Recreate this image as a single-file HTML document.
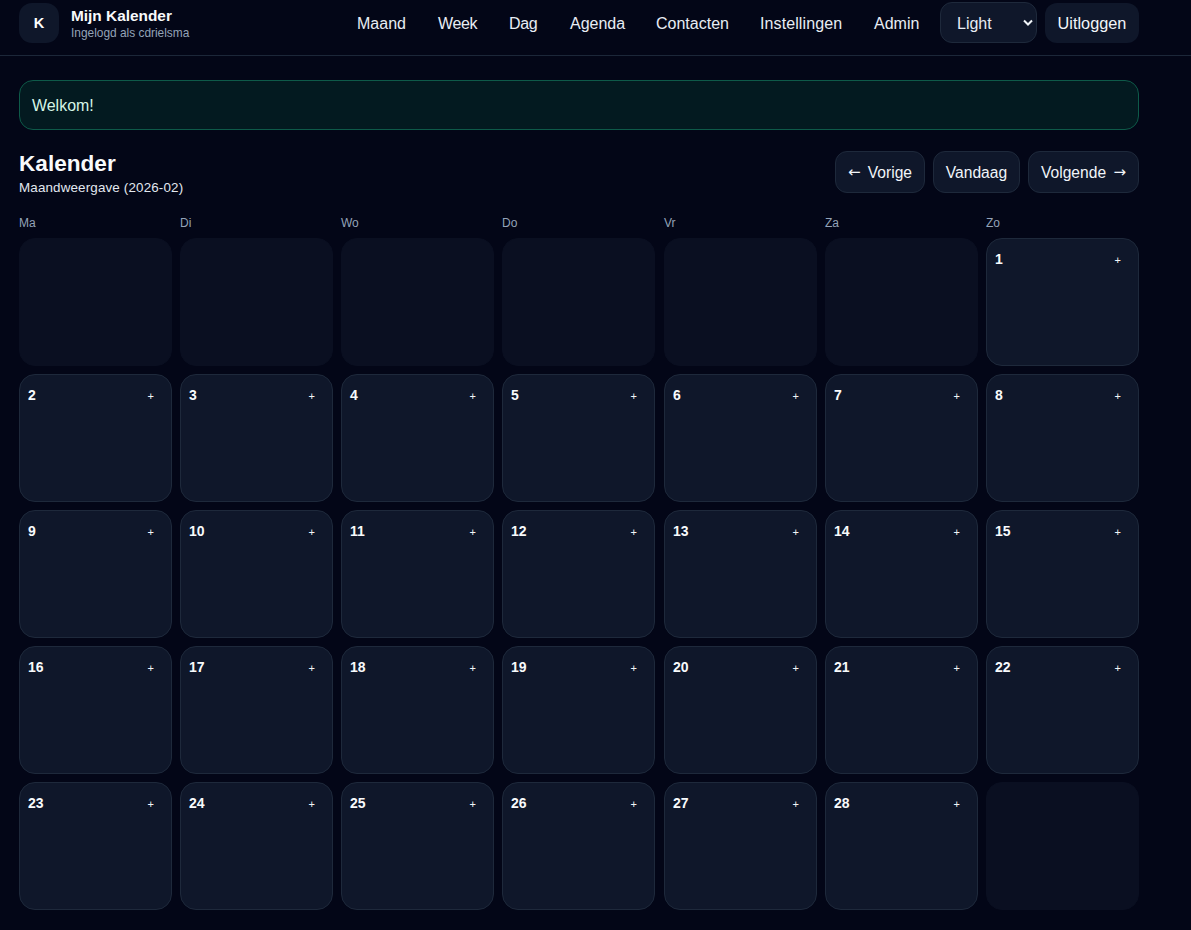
<!DOCTYPE html>
<html lang="nl">
<head>
<meta charset="utf-8">
<title>Mijn Kalender</title>
<style>
*{box-sizing:border-box;margin:0;padding:0}
html,body{width:1191px;height:930px;overflow:hidden}
body{background:#030617;color:#f1f5f9;font-family:"Liberation Sans","DejaVu Sans",sans-serif;position:relative}
.header{position:absolute;left:0;top:0;width:1191px;height:56px;border-bottom:1px solid #1c2739}
.logo{position:absolute;left:19px;top:3px;width:40px;height:40px;border-radius:13px;background:#0f172a;font-weight:700;font-size:14.6px;line-height:41px;text-align:center;color:#fff}
.brand{position:absolute;left:71px;top:6px;font-weight:700;font-size:15.4px;line-height:19px;color:#f8fafc;white-space:nowrap}
.sub{position:absolute;left:71px;top:26px;font-size:11.9px;line-height:14px;color:#94a3b8;white-space:nowrap}
.nav a{position:absolute;top:14px;font-size:16px;line-height:20px;color:#e8edf4;text-decoration:none;white-space:nowrap}
.select{position:absolute;left:940px;top:2px;width:97px;height:41px;border:1px solid #1e293b;border-radius:12px;background:#0f172a;font-size:16px;line-height:41px;padding-left:16px;color:#e8edf4}
.select svg{position:absolute;right:2px;top:14.5px}
.logout{position:absolute;left:1045px;top:3px;width:94px;height:40px;border-radius:12px;background:#0f172a;font-size:16.3px;line-height:40px;text-align:center;color:#f1f5f9}
.welcome{position:absolute;left:19px;top:80px;width:1120px;height:50px;border:1px solid #0e5a49;border-radius:14px;background:#031a20;font-size:15.95px;line-height:50px;padding-left:12px;color:#d6f5e6}
h1{position:absolute;left:19px;top:149px;font-size:22.6px;line-height:30px;font-weight:700;color:#f8fafc;white-space:nowrap}
.h1sub{position:absolute;left:19px;top:180px;letter-spacing:.15px;font-size:13.4px;line-height:16px;color:#e2e8f0;white-space:nowrap}
.btn{position:absolute;top:151px;height:42px;border:1px solid #1e293b;border-radius:12px;background:#0f172a;font-size:15.6px;line-height:42px;text-align:center;color:#f1f5f9;white-space:nowrap;word-spacing:3px}
.ar{font-family:"DejaVu Sans",sans-serif;font-size:15px;position:relative;top:-1.5px}
.dow span{position:absolute;top:216px;font-size:12px;line-height:14px;color:#94a3b8}
.cell{position:absolute;width:153px;height:128px;border-radius:16px;background:#0f172a;border:1px solid #1e293b}
.cell.e{background:#0a0f21;border-color:#0a0f21}
.cell b{position:absolute;left:8px;top:11px;font-size:14px;line-height:18px;font-weight:700;color:#f8fafc}
.cell i{position:absolute;right:17px;top:12px;font-style:normal;font-size:11px;line-height:18px;color:#f1f5f9}
</style>
</head>
<body>
<div class="header">
  <div class="logo">K</div>
  <div class="brand">Mijn Kalender</div>
  <div class="sub">Ingelogd als cdrielsma</div>
  <div class="nav">
    <a style="left:357px">Maand</a>
    <a style="left:438px;letter-spacing:-.35px">Week</a>
    <a style="left:509px;letter-spacing:-.3px">Dag</a>
    <a style="left:570px">Agenda</a>
    <a style="left:656px">Contacten</a>
    <a style="left:760px;letter-spacing:.1px">Instellingen</a>
    <a style="left:874px">Admin</a>
  </div>
  <div class="select">Light<svg width="12" height="10" viewBox="0 0 12 10"><path d="M2 2.5 L6 6.5 L10 2.5" fill="none" stroke="#f1f5f9" stroke-width="2"/></svg></div>
  <div class="logout">Uitloggen</div>
</div>
<div class="welcome">Welkom!</div>
<h1>Kalender</h1>
<div class="h1sub">Maandweergave (2026-02)</div>
<div class="btn" style="left:835px;width:90px"><span class="ar">←</span> Vorige</div>
<div class="btn" style="left:933px;width:87px">Vandaag</div>
<div class="btn" style="left:1028px;width:111px">Volgende <span class="ar">→</span></div>
<div class="dow">
<span style="left:19px">Ma</span><span style="left:180px">Di</span><span style="left:341px">Wo</span><span style="left:502px">Do</span><span style="left:664px">Vr</span><span style="left:825px">Za</span><span style="left:986px">Zo</span>
</div>
<div id="grid">
<div class="cell e" style="left:19px;top:238px"></div>
<div class="cell e" style="left:180px;top:238px"></div>
<div class="cell e" style="left:341px;top:238px"></div>
<div class="cell e" style="left:502px;top:238px"></div>
<div class="cell e" style="left:664px;top:238px"></div>
<div class="cell e" style="left:825px;top:238px"></div>
<div class="cell" style="left:986px;top:238px"><b>1</b><i>+</i></div>
<div class="cell" style="left:19px;top:374px"><b>2</b><i>+</i></div>
<div class="cell" style="left:180px;top:374px"><b>3</b><i>+</i></div>
<div class="cell" style="left:341px;top:374px"><b>4</b><i>+</i></div>
<div class="cell" style="left:502px;top:374px"><b>5</b><i>+</i></div>
<div class="cell" style="left:664px;top:374px"><b>6</b><i>+</i></div>
<div class="cell" style="left:825px;top:374px"><b>7</b><i>+</i></div>
<div class="cell" style="left:986px;top:374px"><b>8</b><i>+</i></div>
<div class="cell" style="left:19px;top:510px"><b>9</b><i>+</i></div>
<div class="cell" style="left:180px;top:510px"><b>10</b><i>+</i></div>
<div class="cell" style="left:341px;top:510px"><b>11</b><i>+</i></div>
<div class="cell" style="left:502px;top:510px"><b>12</b><i>+</i></div>
<div class="cell" style="left:664px;top:510px"><b>13</b><i>+</i></div>
<div class="cell" style="left:825px;top:510px"><b>14</b><i>+</i></div>
<div class="cell" style="left:986px;top:510px"><b>15</b><i>+</i></div>
<div class="cell" style="left:19px;top:646px"><b>16</b><i>+</i></div>
<div class="cell" style="left:180px;top:646px"><b>17</b><i>+</i></div>
<div class="cell" style="left:341px;top:646px"><b>18</b><i>+</i></div>
<div class="cell" style="left:502px;top:646px"><b>19</b><i>+</i></div>
<div class="cell" style="left:664px;top:646px"><b>20</b><i>+</i></div>
<div class="cell" style="left:825px;top:646px"><b>21</b><i>+</i></div>
<div class="cell" style="left:986px;top:646px"><b>22</b><i>+</i></div>
<div class="cell" style="left:19px;top:782px"><b>23</b><i>+</i></div>
<div class="cell" style="left:180px;top:782px"><b>24</b><i>+</i></div>
<div class="cell" style="left:341px;top:782px"><b>25</b><i>+</i></div>
<div class="cell" style="left:502px;top:782px"><b>26</b><i>+</i></div>
<div class="cell" style="left:664px;top:782px"><b>27</b><i>+</i></div>
<div class="cell" style="left:825px;top:782px"><b>28</b><i>+</i></div>
<div class="cell e" style="left:986px;top:782px"></div>
</div>
</body>
</html>
